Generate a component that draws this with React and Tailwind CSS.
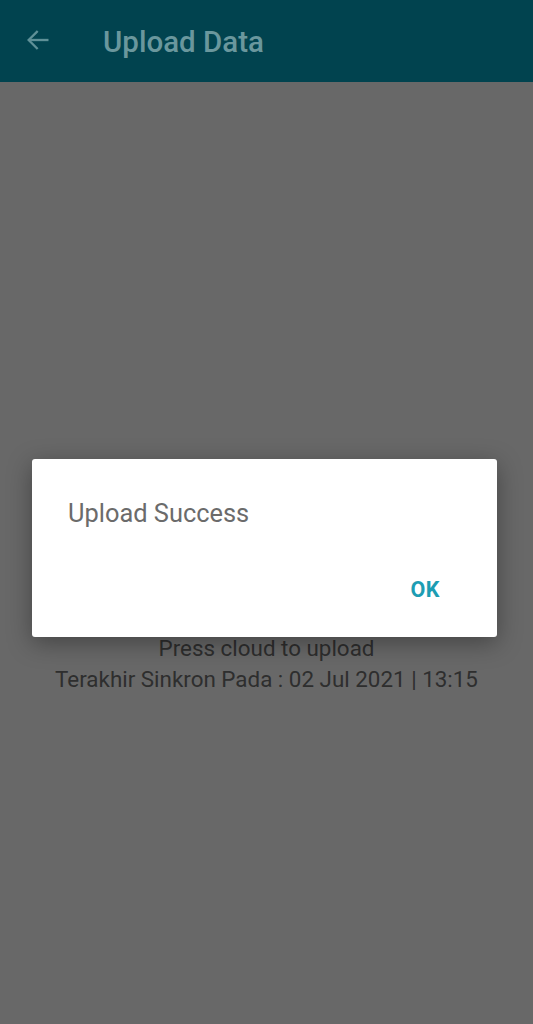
export default function App() {
  return (
    <div
      className="relative h-[1024px] w-full overflow-hidden bg-[#686868]"
      style={{ fontFamily: 'Roboto, "Noto Sans", sans-serif' }}
    >
      {/* App bar (dimmed by overlay) */}
      <div className="flex h-[82px] items-center bg-[#01434f] pl-[24px]">
        <svg width="28" height="28" viewBox="0 0 24 24" fill="none" stroke="#5f9097" strokeWidth="2" strokeLinecap="square" className="-mt-[2px]">
          <path d="M20 12H5" />
          <path d="M11 5l-7 7 7 7" />
        </svg>
        <span className="ml-[51px] mt-[2px] text-[29.5px] font-medium text-[#6a979d]">Upload Data</span>
      </div>

      {/* Page content under the overlay */}
      <div className="flex flex-col items-center pt-[551px] text-[22.4px] leading-[31px] text-[#2e2e2e]">
        <span>Press cloud to upload</span>
        <span>Terakhir Sinkron Pada : 02 Jul 2021 | 13:15</span>
      </div>

      {/* Dialog */}
      <div className="absolute left-[32px] top-[459px] flex h-[178px] w-[465px] flex-col rounded-[3px] bg-white shadow-[0_6px_24px_rgba(0,0,0,0.35)]">
        <div className="px-[36px] pt-[38px] text-[25.4px] leading-[32px] text-[#6b6b6b]">Upload Success</div>
        <div className="mt-auto flex justify-end pb-[31px] pr-[57px]">
          <button className="text-[21.5px] font-bold tracking-wide text-[#1d9db3]">OK</button>
        </div>
      </div>
    </div>
  )
}
